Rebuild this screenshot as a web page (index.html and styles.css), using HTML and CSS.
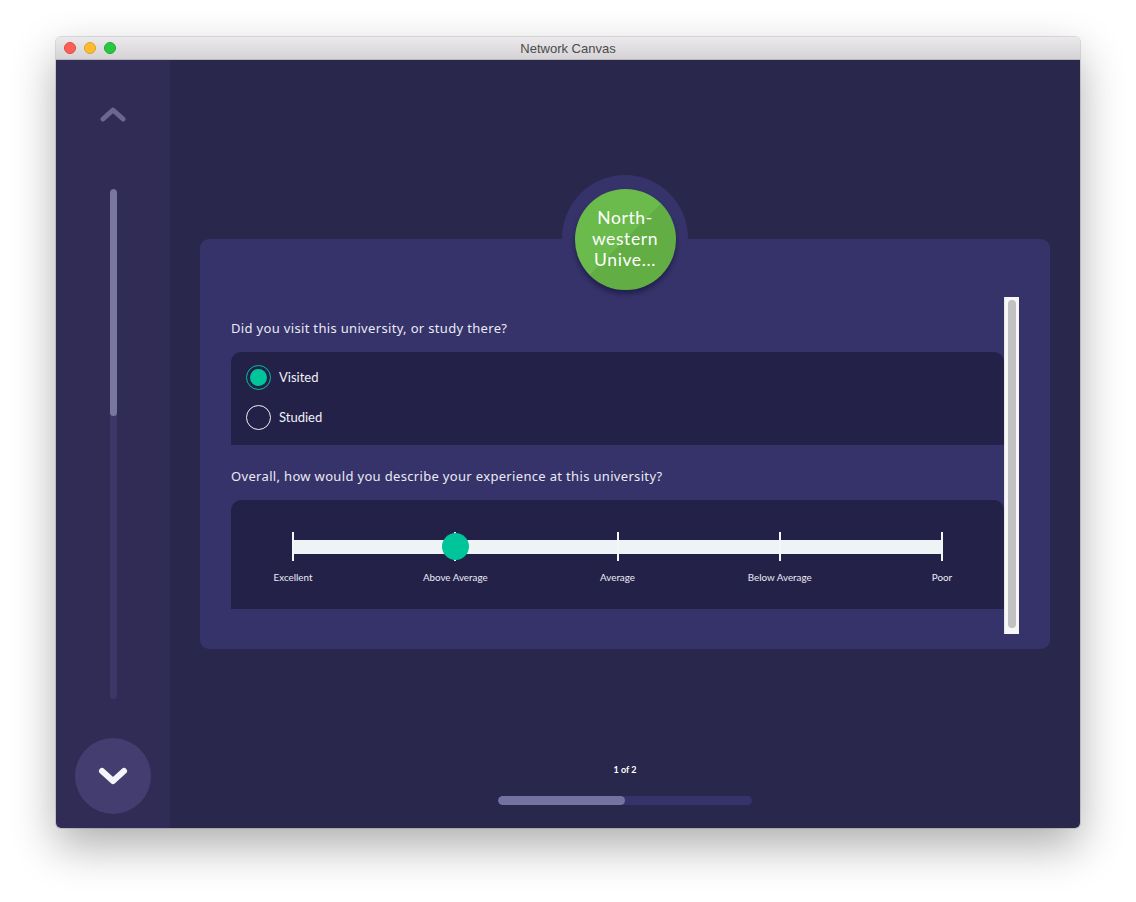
FILE: index.html
```html
<!DOCTYPE html>
<html>
<head>
<meta charset="utf-8">
<link rel="stylesheet" href="styles.css">
</head>
<body>
<div class="window">
  <div class="titlebar">
    <div class="lights">
      <span class="light red"></span>
      <span class="light yellow"></span>
      <span class="light green"></span>
    </div>
    <div class="title">Network Canvas</div>
  </div>
  <div class="app">
    <aside class="sidebar">
      <svg class="chev-up" width="26" height="16" viewBox="0 0 26 16">
        <path d="M3 13 L13 4 L23 13" fill="none" stroke="#6b6694" stroke-width="5" stroke-linecap="round" stroke-linejoin="round"/>
      </svg>
      <div class="track"><div class="track-thumb"></div></div>
      <button class="down-btn">
        <svg width="32" height="22" viewBox="0 0 32 22">
          <path d="M5 5 L16 15 L27 5" fill="none" stroke="#f4f5fa" stroke-width="6" stroke-linecap="round" stroke-linejoin="round"/>
        </svg>
      </button>
    </aside>
    <main class="main">
      <section class="card">
        <div class="node-ring">
          <div class="node"><div class="node-label"><span>North-</span><span>western</span><span>Unive...</span></div></div>
        </div>
        <div class="scroller">
          <div class="form">
            <p class="question">Did you visit this university, or study there?</p>
            <div class="panel radios">
              <label class="radio-row"><span class="radio checked"><span class="dot"></span></span>Visited</label>
              <label class="radio-row"><span class="radio"></span>Studied</label>
            </div>
            <p class="question q2">Overall, how would you describe your experience at this university?</p>
            <div class="panel slider-panel">
              <div class="slider">
                <div class="rail"></div>
                <span class="tick" style="left:0%"></span>
                <span class="tick" style="left:25%"></span>
                <span class="tick" style="left:50%"></span>
                <span class="tick" style="left:75%"></span>
                <span class="tick" style="left:100%"></span>
                <span class="thumb" style="left:25%"></span>
                <span class="lbl" style="left:0%">Excellent</span>
                <span class="lbl" style="left:25%">Above Average</span>
                <span class="lbl" style="left:50%">Average</span>
                <span class="lbl" style="left:75%">Below Average</span>
                <span class="lbl" style="left:100%">Poor</span>
              </div>
            </div>
          </div>
          <div class="scrollbar"><div class="scrollbar-thumb"></div></div>
        </div>
      </section>
      <footer class="footer">
        <div class="count">1 of 2</div>
        <div class="progress"><div class="progress-fill" style="width:50%"></div></div>
      </footer>
    </main>
  </div>
</div>
</body>
</html>
```

FILE: styles.css
```css
* { box-sizing: border-box; }
html, body { margin: 0; padding: 0; background: #ffffff; }
body { width: 1136px; height: 902px; overflow: hidden; font-family: "Lato", "Noto Sans", sans-serif; }

.window {
  margin: 37px 0 0 56px;
  width: 1024px;
  height: 791px;
  border-radius: 5px;
  overflow: hidden;
  box-shadow: 0 18px 45px rgba(0,0,0,0.32), 0 0 0 1px rgba(0,0,0,0.12);
  display: flex;
  flex-direction: column;
}

.titlebar {
  height: 23px;
  flex: none;
  background: linear-gradient(#ebe9eb, #d5d3d5);
  border-bottom: 1px solid #b9b7b9;
  display: flex;
  align-items: center;
  position: relative;
}
.lights { display: flex; gap: 8px; padding-left: 8px; }
.light { width: 12px; height: 12px; border-radius: 50%; display: block; }
.red { background: #fc5f57; border: 1px solid #de4a42; }
.yellow { background: #fdbc2e; border: 1px solid #dfa023; }
.green { background: #28c840; border: 1px solid #1eab2e; }
.title {
  position: absolute; left: 0; right: 0; top: 0; bottom: 0;
  display: flex; align-items: center; justify-content: center;
  font-family: "Liberation Sans", Arial, sans-serif;
  font-size: 13px; color: #4b4b4b;
  pointer-events: none;
}

.app { flex: 1; display: flex; min-height: 0; }

.sidebar {
  width: 114px;
  flex: none;
  background: #312c56;
  display: flex;
  flex-direction: column;
  align-items: center;
  padding: 46px 0 14px;
}
.chev-up { display: block; }
.track {
  margin-top: 67px;
  width: 7px;
  height: 510px;
  border-radius: 4px;
  background: #3c3767;
  position: relative;
  overflow: hidden;
}
.track-thumb {
  height: 227px;
  background: #7a76a2;
  border-radius: 4px;
}
.down-btn {
  margin-top: auto;
  width: 76px; height: 76px;
  border-radius: 50%;
  background: #433e6f;
  border: 0;
  padding: 0;
  display: flex; align-items: center; justify-content: center;
}
.down-btn svg { display: block; margin-top: 2px; }

.main {
  flex: 1;
  background: #29274b;
  display: flex;
  flex-direction: column;
  align-items: center;
  padding: 179px 30px 23px;
}

.card {
  width: 850px;
  height: 410px;
  background: #35336a;
  border-radius: 9px;
  position: relative;
  padding: 58px 31px 15px;
}

.node-ring {
  position: absolute;
  left: 50%;
  top: -64px;
  width: 126px; height: 126px;
  margin-left: -63px;
  border-radius: 50%;
  background: #35336a;
  display: flex; align-items: center; justify-content: center;
}
.node {
  width: 101px; height: 101px;
  border-radius: 50%;
  background: linear-gradient(135deg, #6abb4b 50%, #62ad44 50%);
  box-shadow: 0 4px 5px rgba(10,8,40,0.45);
  display: flex; align-items: center; justify-content: center;
  color: #ffffff;
  margin-top: 2px;
}
.node-label {
  display: flex;
  flex-direction: column;
  align-items: center;
  margin-top: -2px;
  font-family: "Lato", sans-serif;
  font-size: 17.5px;
  letter-spacing: 0.6px;
  line-height: 21px;
}
.node-label span { display: block; height: 21px; }

.scroller {
  height: 337px;
  display: flex;
}
.form { flex: 1; padding-top: 23px; }
.question {
  margin: 0;
  font-family: "Noto Sans", "Lato", sans-serif;
  font-size: 13px;
  line-height: 16px;
  color: #ebeaf3;
  letter-spacing: 0.33px;
}
.q2 { margin-top: 23px; }

.panel {
  background: #232148;
  border-radius: 10px 10px 0 0;
  margin-top: 16px;
}
.radios {
  height: 93px;
  padding: 13px 15px 0;
  display: flex;
  flex-direction: column;
  gap: 16px;
}
.radio-row {
  display: flex;
  align-items: center;
  gap: 8px;
  font-size: 13px;
  color: #f2f2f7;
  height: 24px;
}
.radio {
  width: 25px; height: 25px;
  border-radius: 50%;
  border: 1.5px solid #f0f0f5;
  display: flex; align-items: center; justify-content: center;
  flex: none;
}
.radio.checked { border-color: #00c49a; }
.dot { width: 17px; height: 17px; border-radius: 50%; background: #00c49a; display: block; }

.slider-panel {
  height: 109px;
  padding: 0 62px;
}
.slider {
  position: relative;
  height: 100%;
}
.rail {
  position: absolute;
  left: 0; right: 0;
  top: 40px;
  height: 14px;
  background: #eef4f5;
}
.tick {
  position: absolute;
  top: 32px;
  width: 2px;
  height: 29px;
  margin-left: -1px;
  background: #f4f6f8;
}
.thumb {
  position: absolute;
  top: 33px;
  width: 27px; height: 27px;
  margin-left: -13px;
  border-radius: 50%;
  background: #00c49a;
}
.lbl {
  position: absolute;
  top: 71px;
  transform: translateX(-50%);
  font-size: 9.8px;
  color: #ecebf4;
  white-space: nowrap;
}

.scrollbar {
  width: 15px;
  flex: none;
  background: #f7f7f7;
  border-left: 1px solid #e6e6e6;
  padding: 3px 3px;
}
.scrollbar-thumb {
  height: 328px;
  background: #c1c1c1;
  border-radius: 5px;
}

.footer {
  margin-top: auto;
  display: flex;
  flex-direction: column;
  align-items: center;
}
.count {
  font-size: 9px;
  font-weight: 700;
  color: #ffffff;
  line-height: 12px;
}
.progress {
  margin-top: 20px;
  width: 254px;
  height: 9px;
  border-radius: 5px;
  background: #35336a;
  overflow: hidden;
}
.progress-fill {
  height: 100%;
  background: #7472a0;
  border-radius: 5px;
}
```
